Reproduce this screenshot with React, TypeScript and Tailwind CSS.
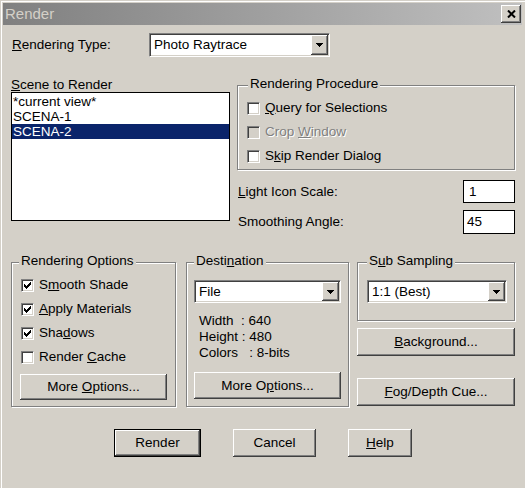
import React from "react";

const raised =
  "bg-[#d4d0c8] shadow-[inset_-1px_-1px_0_#404040,inset_1px_1px_0_#fff,inset_-2px_-2px_0_#808080]";
const sunken =
  "border border-t-[#808080] border-l-[#808080] border-r-white border-b-white shadow-[inset_1px_1px_0_#404040,inset_-1px_-1px_0_#d4d0c8]";

function Check({ checked = false, disabled = false }: { checked?: boolean; disabled?: boolean }) {
  return (
    <span
      className={`relative block h-[13px] w-[13px] shrink-0 ${sunken} ${disabled ? "bg-[#d4d0c8]" : "bg-white"}`}
    >
      {checked && (
        <svg className="absolute left-[2px] top-[2px]" width="7" height="7" viewBox="0 0 7 7" shapeRendering="crispEdges">
          <rect x="0" y="2" width="1" height="3" fill="#000" />
          <rect x="1" y="3" width="1" height="3" fill="#000" />
          <rect x="2" y="4" width="1" height="3" fill="#000" />
          <rect x="3" y="3" width="1" height="3" fill="#000" />
          <rect x="4" y="2" width="1" height="3" fill="#000" />
          <rect x="5" y="1" width="1" height="3" fill="#000" />
          <rect x="6" y="0" width="1" height="3" fill="#000" />
        </svg>
      )}
    </span>
  );
}

function CheckRow({
  children,
  checked,
  disabled,
}: {
  children: React.ReactNode;
  checked?: boolean;
  disabled?: boolean;
}) {
  return (
    <div className="flex h-[24px] items-center gap-[5px] pl-[9px]">
      <Check checked={checked} disabled={disabled} />
      <span className={disabled ? "text-[#808080] [text-shadow:1px_1px_0_#fff]" : ""}>{children}</span>
    </div>
  );
}

function Combo({ value, className }: { value: string; className: string }) {
  return (
    <div className={`flex bg-white p-[1px] ${sunken} ${className}`}>
      <span className="flex flex-1 items-center pl-[3px]">{value}</span>
      <span className={`flex h-full w-[17px] items-center justify-center ${raised}`}>
        <svg width="7" height="4" viewBox="0 0 7 4" shapeRendering="crispEdges">
          <polygon points="0,0 7,0 3.5,4" fill="#000" />
        </svg>
      </span>
    </div>
  );
}

function Button({
  children,
  className,
  isDefault = false,
}: {
  children: React.ReactNode;
  className: string;
  isDefault?: boolean;
}) {
  return (
    <div className={`${isDefault ? "border border-black" : ""} ${className}`}>
      <div className={`flex h-full w-full items-center justify-center ${raised}`}>
        <span>{children}</span>
      </div>
    </div>
  );
}

function Group({
  title,
  titleLeft,
  className,
  children,
}: {
  title: React.ReactNode;
  titleLeft: string;
  className: string;
  children: React.ReactNode;
}) {
  return (
    <div className={`relative border border-[#808080] shadow-[inset_1px_1px_0_#fff,1px_1px_0_#fff] ${className}`}>
      <span className={`absolute -top-[10px] bg-[#d4d0c8] px-[2px] leading-[16px] ${titleLeft}`}>{title}</span>
      {children}
    </div>
  );
}

export default function App() {
  return (
    <div className="h-[488px] w-[525px] overflow-hidden bg-[#d4d0c8] font-['Liberation_Sans',Arial,sans-serif] text-[13.5px] leading-[16px] text-black shadow-[inset_1px_1px_0_#d4d0c8,inset_2px_2px_0_#fff]">
      {/* title bar */}
      <div className="mx-[3px] mt-[3px] flex h-[22px] items-center justify-between bg-linear-to-r from-[#808080] to-[#c0c0c0] pr-[1px]">
        <span className="pl-[2px] text-[15px] text-[#d4d0c8]">Render</span>
        <span className={`flex h-[18px] w-[20px] items-center justify-center ${raised}`}>
          <svg width="9" height="8" viewBox="0 0 9 8">
            <path d="M1 0.5 L8 7.5 M8 0.5 L1 7.5" stroke="#000" strokeWidth="2" />
          </svg>
        </span>
      </div>

      {/* rendering type */}
      <div className="mt-[8px] flex h-[24px] items-center">
        <span className="ml-[12px] w-[137px]">
          <u>R</u>endering Type:
        </span>
        <Combo value="Photo Raytrace" className="h-[24px] w-[181px]" />
      </div>

      {/* scene + procedure */}
      <div className="mt-[20px] flex items-start">
        <div className="ml-[11px] w-[219px]">
          <div className="h-[15px] leading-[15px]">
            <u>S</u>cene to Render
          </div>
          <div className="h-[129px] border border-black bg-white pt-[1px]">
            <div className="h-[15px] pl-[1px] leading-[15px]">*current view*</div>
            <div className="h-[15px] pl-[1px] leading-[15px]">SCENA-1</div>
            <div className="h-[15px] bg-[#0a246a] pl-[1px] leading-[15px] text-white">SCENA-2</div>
          </div>
        </div>

        <div className="ml-[7px] w-[278px]">
          <Group title="Rendering Procedure" titleLeft="left-[10px]" className="mt-[8px] h-[85px] pt-[10px]">
            <CheckRow>
              <u>Q</u>uery for Selections
            </CheckRow>
            <CheckRow disabled>
              Crop <u>W</u>indow
            </CheckRow>
            <CheckRow>
              S<u>k</u>ip Render Dialog
            </CheckRow>
          </Group>
          <div className="mt-[10px] flex h-[23px] items-center justify-between">
            <span className="ml-[1px]">
              <u>L</u>ight Icon Scale:
            </span>
            <div className="flex h-[23px] w-[52px] items-center border border-black bg-white pl-[5px]">1</div>
          </div>
          <div className="mt-[7px] flex h-[24px] items-center justify-between">
            <span className="ml-[1px]">
              Smoothin<u>g</u> Angle:
            </span>
            <div className="flex h-[24px] w-[52px] items-center border border-black bg-white pl-[3px]">45</div>
          </div>
        </div>
      </div>

      {/* options row */}
      <div className="mt-[28px] flex items-start">
        <Group title="Rendering Options" titleLeft="left-[7px]" className="ml-[11px] h-[145px] w-[165px] pt-[10px]">
          <CheckRow checked>
            S<u>m</u>ooth Shade
          </CheckRow>
          <CheckRow checked>
            <u>A</u>pply Materials
          </CheckRow>
          <CheckRow checked>
            Sha<u>d</u>ows
          </CheckRow>
          <CheckRow>
            Render <u>C</u>ache
          </CheckRow>
          <Button className="ml-[8px] mt-[5px] h-[26px] w-[147px]">
            More <u>O</u>ptions...
          </Button>
        </Group>

        <Group title={<>Desti<u>n</u>ation</>} titleLeft="left-[7px]" className="ml-[10px] h-[145px] w-[163px] pt-[17px]">
          <Combo value="File" className="ml-[7px] h-[23px] w-[147px]" />
          <div className="ml-[12px] mt-[10px] whitespace-pre leading-[16px]">
            <div>{"Width  : 640"}</div>
            <div>{"Height : 480"}</div>
            <div>{"Colors   : 8-bits"}</div>
          </div>
          <Button className="ml-[7px] mt-[11px] h-[27px] w-[147px]">
            More O<u>p</u>tions...
          </Button>
        </Group>

        <div className="ml-[8px] w-[158px]">
          <Group title={<>S<u>u</u>b Sampling</>} titleLeft="left-[9px]" className="h-[59px] pt-[17px]">
            <Combo value="1:1 (Best)" className="ml-[9px] h-[23px] w-[140px]" />
          </Group>
          <Button className="mt-[7px] h-[28px] w-[158px]">
            <u>B</u>ackground...
          </Button>
          <Button className="mt-[22px] h-[28px] w-[158px]">
            <u>F</u>og/Depth Cue...
          </Button>
        </div>
      </div>

      {/* bottom buttons */}
      <div className="mt-[22px] flex">
        <Button isDefault className="ml-[114px] h-[28px] w-[87px]">
          Render
        </Button>
        <Button className="ml-[32px] h-[28px] w-[83px]">Cancel</Button>
        <Button className="ml-[32px] h-[28px] w-[64px]">
          <u>H</u>elp
        </Button>
      </div>
    </div>
  );
}
